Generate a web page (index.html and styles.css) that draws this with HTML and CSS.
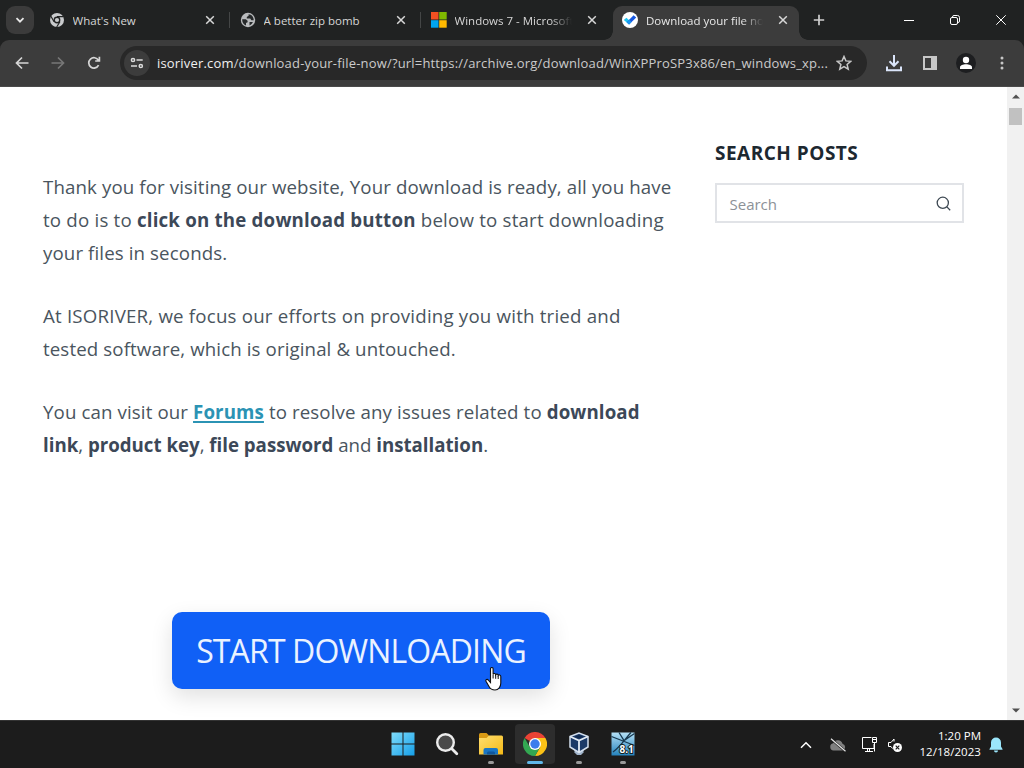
FILE: index.html
```html
<!DOCTYPE html>
<html lang="en">
<head>
  <meta charset="UTF-8">
  <meta name="viewport" content="width=device-width, initial-scale=1.0">
  <title>Download your file now</title>
  <link rel="stylesheet" href="styles.css">
</head>
<body>
  <div class="tabstrip">
    <button class="tab-search">
      <svg width="12" height="12" viewBox="0 0 12 12"><path d="M2.5 4.2L6 7.7l3.5-3.5" fill="none" stroke="#e8e8e8" stroke-width="1.8"/></svg>
    </button>
    <div class="tab">
      <svg class="favicon" viewBox="0 0 16 16">
        <circle cx="8" cy="8" r="7" fill="#c9cbcd"/>
        <path d="M8 4.6h6.4M5.1 9.7L1.9 4.2M10.9 9.7L7.7 15" stroke="#222424" stroke-width="1.2"/>
        <circle cx="8" cy="8" r="3.4" fill="#222424"/>
        <circle cx="8" cy="8" r="2.1" fill="#c9cbcd"/>
      </svg>
      <span class="tab-title">What's New</span>
      <svg class="close" viewBox="0 0 10 10"><path d="M1.2 1.2l7.6 7.6M8.8 1.2L1.2 8.8"/></svg>
    </div>
    <div class="tab">
      <svg class="favicon" viewBox="0 0 16 16">
        <circle cx="8" cy="8" r="7.2" fill="#b9bbbd"/>
        <path d="M2.2 7.2h3.6l1.8 1.5v1.5l-1.6.7v2.6C4 13 2.2 10.7 2.2 8zM8.6 2.3v1.5L6.8 4.9v1.5h3.4l1.2 1.8h2.3C13.8 5 11.5 2.4 8.6 2.3zM9.5 10h3.4c-.6 1.6-1.8 2.8-3.4 3.4z" fill="#26292a"/>
      </svg>
      <span class="tab-title">A better zip bomb</span>
      <svg class="close" viewBox="0 0 10 10"><path d="M1.2 1.2l7.6 7.6M8.8 1.2L1.2 8.8"/></svg>
    </div>
    <div class="tab no-line">
      <svg class="favicon" viewBox="0 0 16 16">
        <path d="M0 0h7.5v7.5H0z" fill="#f25022"/>
        <path d="M8.2 0h7.5v7.500H8.200z" fill="#7fba00"/>
        <path d="M0 8.200h7.500v7.500H0z" fill="#00a4ef"/>
        <path d="M8.200 8.200h7.500v7.500H8.200z" fill="#ffb900"/>
      </svg>
      <span class="tab-title fade">Windows 7 - Microsoft</span>
      <svg class="close" viewBox="0 0 10 10"><path d="M1.2 1.2l7.6 7.6M8.8 1.2L1.2 8.8"/></svg>
    </div>
    <div class="tab active">
      <svg class="favicon" viewBox="0 0 16 16">
        <circle cx="8" cy="8" r="8" fill="#fff"/>
        <path d="M1.8 8l2.6-2.300 3 2.700-.3 4.200z" fill="#22c3f0"/>
        <path d="M7.100 12.600L4.700 10.300l6.900-7 2.600 2.300z" fill="#1557e0"/>
        <path d="M4.700 10.300L7.400 7.600l2 2.600-2.300 2.400z" fill="#1b97f0"/>
      </svg>
      <span class="tab-title fade">Download your file now</span>
      <svg class="close" viewBox="0 0 10 10"><path d="M1.2 1.2l7.6 7.6M8.8 1.2L1.2 8.8"/></svg>
    </div>
    <svg class="new-tab" width="12" height="12" viewBox="0 0 12 12"><path d="M6 .8v10.4M.8 6h10.4" stroke="#d0d0d0" stroke-width="1.7"/></svg>
    <div class="window-buttons">
      <span><svg width="10" height="10" viewBox="0 0 10 10"><path d="M0 5.5h10"/></svg></span>
      <span><svg width="10" height="10" viewBox="0 0 10 10"><rect x=".5" y="2.5" width="7" height="7" rx="1.5"/><path d="M2.5 2.300V2A1.500 1.500 0 0 1 4 .5h3.500a2 2 0 0 1 2 2V6A1.500 1.500 0 0 1 8 7.500h-.3"/></svg></span>
      <span><svg width="10" height="10" viewBox="0 0 10 10"><path d="M.3.3l9.4 9.4M9.7.3L.3 9.7"/></svg></span>
    </div>
  </div>

  <div class="toolbar">
    <svg class="nav" viewBox="0 0 16 16"><path d="M14.5 8H2.5M8 2.5L2.5 8 8 13.5"/></svg>
    <svg class="nav disabled" viewBox="0 0 16 16"><path d="M1.5 8h12M8 2.5l5.5 5.5L8 13.5"/></svg>
    <svg class="nav" viewBox="0 0 16 16"><path d="M12.6 10.2A5.2 5.2 0 1 1 12.4 5.2M13.4 1.8V6H9.2"/></svg>
    <div class="omnibox">
      <span class="site-info">
        <svg width="14" height="12" viewBox="0 0 14 12" fill="none" stroke="#dcdcdc" stroke-width="1.5"><circle cx="3" cy="3" r="1.6"/><path d="M6.5 3h6.2M1 9h6"/><circle cx="10.8" cy="9" r="1.6"/></svg>
      </span>
      <span class="url"><b>isoriver.com</b>/download-your-file-now/?url=https://archive.org/download/WinXPProSP3x86/en_windows_xp...</span>
      <svg class="star" width="16" height="16" viewBox="0 0 16 16"><path d="M8 1.5l1.9 4.4 4.8.4-3.6 3.2 1.1 4.7L8 11.7l-4.2 2.5 1.1-4.7L1.3 6.3l4.8-.4z" fill="none" stroke="#c8c8c8" stroke-width="1.5"/></svg>
    </div>
    <svg class="download" width="18" height="18" viewBox="0 0 18 18"><path d="M9 1v10.5M4.500 7.300L9 11.800l4.500-4.500M2 12.500v3.700h14v-3.700" fill="none" stroke="#dbe5fa" stroke-width="2"/></svg>
    <svg class="panel" width="14" height="14" viewBox="0 0 14 14"><rect x="1" y="1" width="12" height="12" fill="none" stroke="#c7c7c7" stroke-width="2"/><path d="M8 1h5v12H8z" fill="#c7c7c7"/></svg>
    <svg class="profile" width="20" height="20" viewBox="0 0 20 20"><circle cx="10" cy="10" r="10" fill="#1d1e20"/><circle cx="10" cy="7" r="3.2" fill="#fff"/><path d="M4 16v-1.8c0-2 3-3 6-3s6 1 6 3V16z" fill="#fff"/></svg>
    <svg class="menu" width="4" height="16" viewBox="0 0 4 16" fill="#c7c7c7"><circle cx="2" cy="3" r="1.5"/><circle cx="2" cy="8" r="1.5"/><circle cx="2" cy="13" r="1.5"/></svg>
  </div>

  <div class="page">
    <div class="article">
      <p>
        <span class="line">Thank you for visiting our website, Your download is ready, all you have</span>
        <span class="line wide">to do is to <b>click on the download button</b> below to start downloading</span>
        <span class="line">your files in seconds.</span>
      </p>
      <p>
        <span class="line wide">At ISORIVER, we focus our efforts on providing you with tried and</span>
        <span class="line">tested software, which is original &amp; untouched.</span>
      </p>
      <p>
        <span class="line">You can visit our <a href="#">Forums</a> to resolve any issues related to <b>download</b></span>
        <span class="line tight"><b>link</b>, <b>product key</b>, <b>file password</b> and <b>installation</b>.</span>
      </p>
      <button class="start">START DOWNLOADING</button>
    </div>
    <div class="sidebar">
      <h2>SEARCH POSTS</h2>
      <div class="search">
        <span>Search</span>
        <svg width="15" height="15" viewBox="0 0 15 15" fill="none" stroke="#3d4852" stroke-width="1.3"><circle cx="6.8" cy="6.8" r="5.6"/><path d="M10.9 10.9l3.3 3.3"/></svg>
      </div>
    </div>
    <div class="scrollbar">
      <svg width="8" height="5" viewBox="0 0 8 5"><path d="M0 4.5L4 .5l4 4z" fill="#505050"/></svg>
      <span class="thumb"></span>
      <svg width="8" height="5" viewBox="0 0 8 5"><path d="M0 .5l4 4 4-4z" fill="#505050"/></svg>
    </div>
  </div>

  <div class="taskbar">
    <div class="apps">
      <span class="app">
        <svg width="24" height="24" viewBox="0 0 24 24">
          <defs><linearGradient id="win" x1="0" y1="0" x2="1" y2="1"><stop offset="0" stop-color="#7fdcfb"/><stop offset="1" stop-color="#159fe8"/></linearGradient></defs>
          <path d="M.5.5h11v11H.5zM12.500.5h11v11h-11zM.5 12.500h11v11H.5zM12.500 12.500h11v11h-11z" fill="url(#win)"/>
        </svg>
      </span>
      <span class="app">
        <svg width="24" height="24" viewBox="0 0 24 24"><circle cx="10.5" cy="10.5" r="8.3" fill="#4a4a4a" stroke="#ececec" stroke-width="2.4"/><path d="M16.8 16.8l5 5" stroke="#ececec" stroke-width="2.8" stroke-linecap="round"/></svg>
      </span>
      <span class="app running">
        <svg width="26" height="24" viewBox="0 0 26 24">
          <defs><linearGradient id="dir" x1="0" y1="0" x2="1" y2="1"><stop offset="0" stop-color="#ffdf70"/><stop offset="1" stop-color="#f5b916"/></linearGradient></defs>
          <path d="M1 2.5Q1 1 2.5 1h6L11 3.500V9H1z" fill="#d99a14"/>
          <path d="M1 6h7.500L11 3.500h12.500Q25 3.500 25 5v17.500H1z" fill="url(#dir)"/>
          <path d="M5.500 22.500V18q0-2 2-2h10.500q2 0 2 2v4.500z" fill="#1976c5"/>
          <path d="M9 22.500v-1.500q0-1.500 1.500-1.500h5q1.500 0 1.500 1.500v1.500z" fill="#0f579e"/>
        </svg>
      </span>
      <span class="app running current">
        <svg width="24" height="24" viewBox="0 0 24 24">
          <path d="M12 12L1.6 6A12 12 0 0 1 22.4 6z" fill="#ea4335"/>
          <path d="M12 12V6h10.400A12 12 0 0 1 12 24l5.200-9z" fill="#fbc116"/>
          <path d="M12 12l5.200 3L12 24A12 12 0 0 1 1.600 6l5.200 9z" fill="#33a852"/>
          <circle cx="12" cy="12" r="6" fill="#fff"/>
          <circle cx="12" cy="12" r="4.700" fill="#3b7ded"/>
        </svg>
      </span>
      <span class="app running">
        <svg width="20" height="24" viewBox="0 0 20 24">
          <path d="M5.500 17h9v3.500L12 23H8l-2.500-2.500z" fill="#9fb3ca"/>
          <path d="M1 4.500L10 1l9 3.500v10.500L10 20.500 1 15z" fill="#1b3a68" stroke="#d2deed" stroke-width="1.500"/>
          <path d="M1 4.500L10 8.500l9-4M10 8.500v12" fill="none" stroke="#e4edf6" stroke-width="1.800"/>
          <path d="M5.500 4.700L10 2.900l4.500 1.800L10 6.600z" fill="#102a50"/>
        </svg>
      </span>
      <span class="app running">
        <svg width="24" height="24" viewBox="0 0 24 24">
          <defs><linearGradient id="iso" x1="0" y1="0" x2="0" y2="1"><stop offset="0" stop-color="#b4e0f6"/><stop offset="1" stop-color="#2583bd"/></linearGradient></defs>
          <path d="M.5.5h23v23H.5z" fill="url(#iso)"/>
          <path d="M.5 4.500l23 9M20 .5C14 7 10 14 2 20M8 .5l5 8 10.500-7" stroke="#17384f" stroke-width="1.300" fill="none"/>
          <text x="8.500" y="20.500" class="badge">8.1</text>
        </svg>
      </span>
    </div>
    <div class="tray">
      <svg width="12" height="8" viewBox="0 0 12 8"><path d="M1 6.800l5-5 5 5" fill="none" stroke="#fff" stroke-width="1.500"/></svg>
      <svg class="cloud" width="18" height="14" viewBox="0 0 18 14"><path d="M4.500 12.500a3.700 3.700 0 0 1-.3-7.300A5 5 0 0 1 13.500 5.800a3.500 3.500 0 0 1 .3 6.700z" fill="#808080"/><path d="M2 .8l14.500 12.500" stroke="#1c1c1c" stroke-width="2.400"/><path d="M2 .8l14.500 12.500" stroke="#e6e6e6" stroke-width="1.200"/></svg>
      <svg class="network" width="17" height="17" viewBox="0 0 17 17" fill="none" stroke="#fff"><path d="M10.500 1.500h-9v11h11.500V8M4 15.500h8M6.500 12.500v3M8.500 12.500v3"/><path d="M11.500 1.500h4v5h-4zM11.500 3.500h4M13.500 6.500v9"/></svg>
      <svg class="sound" width="16" height="16" viewBox="0 0 16 16"><path d="M7 4.500V2L4 5.500H1.500v4H4l1.500 2" fill="none" stroke="#fff"/><circle cx="10.500" cy="10.500" r="4.500" fill="#fff"/><path d="M8.700 8.700l3.600 3.600M12.300 8.700l-3.600 3.600" stroke="#1c1c1c" stroke-width="1.200"/></svg>
      <div class="clock"><div>1:20 PM</div><div class="date">12/18/2023</div></div>
      <svg class="bell" width="14" height="16" viewBox="0 0 14 16" fill="#9be6fb"><path d="M7 .5a5 5 0 0 0-5 5v4L.5 12v.8h13V12L12 9.500v-4a5 5 0 0 0-5-5zM5 13.600h4a2 2 0 0 1-4 0z"/></svg>
    </div>
  </div>

  <svg class="cursor" width="18" height="24" viewBox="0 0 18 24"><path d="M5.500 1.800c0-1.700 2.600-1.700 2.600 0v5.400c.5-1.200 2.500-.9 2.600.5.600-1 2.400-.7 2.500.7.600-.9 2.600-.6 2.600 1.100V16c0 3.500-2.200 7-5.800 7-3 0-4.800-1.200-6-3.500L1 14.300c-.8-1.600 1.300-2.600 2.400-1.200l2.100 2.400z" fill="#fff" stroke="#111" stroke-width="1.100"/><path d="M8.100 7.500v4M10.700 8v3.800M13.200 9v3" stroke="#111"/></svg>
</body>
</html>
```
FILE: styles.css
```css
* {
  box-sizing: border-box;
}
body {
  margin: 0;
  width: 1024px;
  height: 768px;
  overflow: hidden;
  display: flex;
  flex-direction: column;
  position: relative;
  font-family: "Open Sans", "Noto Sans", sans-serif;
  background: #202121;
}
svg {
  display: block;
  flex: none;
}
button {
  border: 0;
  padding: 0;
  font-family: inherit;
}

/* tabs */
.tabstrip {
  height: 40px;
  flex: none;
  display: flex;
  align-items: flex-start;
  padding: 6px 0 0 6px;
  background: #202222;
}
.tab-search {
  width: 28px;
  height: 28px;
  margin-right: 6px;
  border-radius: 9px;
  background: #3b3b3b;
  display: flex;
  align-items: center;
  justify-content: center;
}
.tab {
  position: relative;
  width: 187px;
  height: 28px;
  margin-right: 4px;
  padding: 0 12px 0 8.6px;
  display: flex;
  align-items: center;
  color: #d6d6d6;
}
.tab::after {
  content: "";
  position: absolute;
  right: -3px;
  top: 6px;
  width: 1px;
  height: 16px;
  background: #444646;
}
.tab.no-line::after {
  display: none;
}
.favicon {
  width: 16px;
  height: 16px;
}
.tab-title {
  flex: 1;
  margin: 0 15px 0 8px;
  overflow: hidden;
  white-space: nowrap;
  font-size: 11.5px;
}
.tab-title.fade {
  -webkit-mask-image: linear-gradient(90deg, #000 82%, transparent 100%);
  mask-image: linear-gradient(90deg, #000 82%, transparent 100%);
}
.close {
  width: 10px;
  height: 10px;
  fill: none;
  stroke: #d8d8d8;
  stroke-width: 1.5;
}
.tab.active {
  width: 186px;
  height: 34px;
  margin-right: 5px;
  padding: 0 11px 6px 9px;
  border-radius: 9px 9px 0 0;
  background: #3c3c3c;
  color: #e8e8e8;
}
.tab.active::before,
.tab.active::after {
  content: "";
  position: absolute;
  top: auto;
  bottom: 0;
  width: 9px;
  height: 9px;
}
.tab.active::before {
  left: -9px;
  background: radial-gradient(circle at 0 0, transparent 8.5px, #3c3c3c 9px);
}
.tab.active::after {
  right: -9px;
  background: radial-gradient(circle at 100% 0, transparent 8.5px, #3c3c3c 9px);
}
.new-tab {
  margin: 8px 0 0 9px;
}
.window-buttons {
  margin-left: auto;
  display: flex;
}
.window-buttons span {
  width: 46px;
  height: 28px;
  display: flex;
  align-items: center;
  justify-content: center;
}
.window-buttons svg {
  fill: none;
  stroke: #fff;
}

/* toolbar */
.toolbar {
  height: 47px;
  flex: none;
  display: flex;
  align-items: center;
  padding: 0 20px 0 14px;
  border-bottom: 1px solid #4a4a4a;
  border-radius: 9px 9px 0 0;
  background: #3c3c3c;
}
.nav {
  width: 16px;
  height: 16px;
  margin-right: 20px;
  fill: none;
  stroke: #d6d6d6;
  stroke-width: 1.7;
}
.nav.disabled {
  stroke: #777;
}
.omnibox {
  width: 747px;
  height: 34px;
  margin-left: -2px;
  padding: 0 15px 0 4px;
  border-radius: 17px;
  background: #282828;
  display: flex;
  align-items: center;
}
.site-info {
  width: 26px;
  height: 26px;
  border-radius: 50%;
  background: #3c3c3c;
  display: flex;
  align-items: center;
  justify-content: center;
}
.url {
  flex: 1;
  margin-left: 7px;
  white-space: nowrap;
  font-size: 13px;
  letter-spacing: 0.18px;
  color: #cbcbcb;
}
.url b {
  font-weight: 400;
  color: #f0f0f0;
}
.download {
  margin-left: 18px;
}
.panel {
  margin-left: 20px;
}
.profile {
  margin-left: 19px;
}
.menu {
  margin-left: auto;
}

/* page */
.page {
  height: 633px;
  flex: none;
  display: flex;
  background: #fff;
}
.article {
  width: 636px;
  margin-left: 43px;
  padding-top: 83px;
  font-size: 18.7px;
  line-height: 33px;
  letter-spacing: 0.11px;
  color: #4a555e;
}
.article p {
  margin: 0 0 30px;
}
.article b {
  color: #3c4858;
}
.article b,
.article a {
  font-weight: 700;
}
.article a {
  color: #2b93b4;
  text-decoration-thickness: 2px;
  text-underline-offset: 2px;
}
.line {
  display: block;
  white-space: nowrap;
}
.line.wide {
  letter-spacing: 0.2px;
}
.line.tight {
  letter-spacing: -0.01px;
}
.start {
  display: block;
  width: 378px;
  height: 77px;
  margin: 151px 0 0 129px;
  padding-top: 1px;
  border-radius: 10px;
  background: #1060f6;
  box-shadow: 0 8px 22px rgba(0, 0, 0, 0.12);
  color: #eaf2ff;
  font-size: 32px;
  line-height: 76px;
  letter-spacing: -0.85px;
  white-space: nowrap;
}
.sidebar {
  width: 249px;
  margin-left: 36px;
  padding-top: 54px;
}
.sidebar h2 {
  margin: 0 0 18px;
  font-size: 19px;
  font-weight: 700;
  line-height: 24px;
  letter-spacing: 0.5px;
  color: #1d2830;
}
.search {
  height: 40px;
  padding: 1px 11px 0 12.5px;
  border: 2px solid #e1e3e7;
  display: flex;
  align-items: center;
  justify-content: space-between;
  font-size: 15px;
  color: #8c9197;
}
.scrollbar {
  width: 17px;
  margin-left: auto;
  padding: 7px 0;
  background: #f1f1f1;
  display: flex;
  flex-direction: column;
  align-items: center;
}
.thumb {
  width: 13px;
  height: 17px;
  margin: 9px 0 auto;
  background: #c1c1c1;
}

/* taskbar */
.taskbar {
  height: 48px;
  flex: none;
  display: flex;
  align-items: center;
  border-top: 1px solid #333;
  background: #1c1c1c;
}
.apps {
  margin: -1px 0 0 383px;
  display: flex;
  gap: 4px;
}
.app {
  position: relative;
  width: 40px;
  height: 40px;
  border-radius: 4px;
  display: flex;
  align-items: center;
  justify-content: center;
}
.app.current {
  background: #2d2d2d;
}
.app.running::after {
  content: "";
  position: absolute;
  left: 17px;
  bottom: 0;
  width: 6px;
  height: 3px;
  border-radius: 2px;
  background: #9a9a9a;
}
.app.current::after {
  left: 12px;
  width: 16px;
  background: #60b8ea;
}
.badge {
  font-size: 10px;
  font-weight: 700;
  fill: #fff;
  stroke: #122;
  stroke-width: 2px;
  paint-order: stroke;
}
.tray {
  margin-left: auto;
  padding-right: 21px;
  display: flex;
  align-items: center;
}
.cloud {
  margin-left: 17px;
}
.network {
  margin-left: 14px;
}
.sound {
  margin-left: 9px;
}
.clock {
  width: 62px;
  margin: -2px 0 0 16px;
  text-align: right;
  font-size: 11.5px;
  line-height: 16px;
  white-space: nowrap;
  color: #fff;
}
.date {
  letter-spacing: 0.05px;
}
.bell {
  margin-left: 8px;
}

.cursor {
  position: absolute;
  left: 485px;
  top: 667px;
}
```
